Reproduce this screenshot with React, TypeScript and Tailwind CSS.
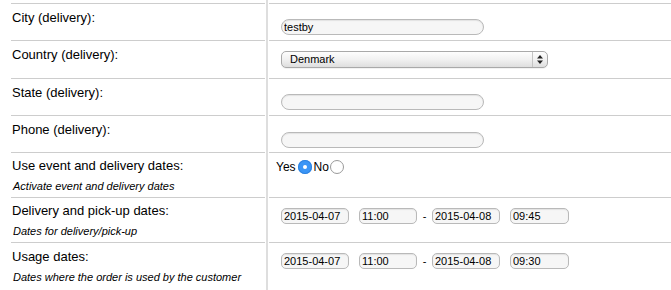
import React from 'react';

const rowLine = 'border-t border-[#cdcdcd]';

function TextBox({ value = '', className = '' }: { value?: string; className?: string }) {
  return (
    <input
      readOnly
      value={value}
      className={`h-[16px] border border-[#b9b9b9] bg-[#f6f6f6] px-[2px] text-[11px] leading-[14px] text-black outline-none shadow-[inset_0_1px_1px_rgba(0,0,0,0.08)] ${className}`}
    />
  );
}

function Select({ value }: { value: string }) {
  return (
    <div className="flex h-[17px] w-[267px] items-stretch rounded-[5px] border border-[#a9a9a9] bg-linear-to-b from-[#fdfdfd] via-[#f1f1f1] to-[#dedede] text-[11px] shadow-[0_1px_0_rgba(0,0,0,0.05)]">
      <div className="flex flex-1 items-center pl-[8px] leading-none">{value}</div>
      <div className="flex w-[15px] items-center justify-center border-l border-[#c4c4c4]">
        <svg width="6" height="9" viewBox="0 0 6 9">
          <path d="M3 0 L6 3.5 L0 3.5 Z" fill="#222" />
          <path d="M3 9 L6 5.5 L0 5.5 Z" fill="#222" />
        </svg>
      </div>
    </div>
  );
}

function Row({
  label,
  hint,
  height,
  labelTop = 'pt-[6px]',
  children,
}: {
  label: string;
  hint?: string;
  height: string;
  labelTop?: string;
  children?: React.ReactNode;
}) {
  return (
    <div className={`flex ${height}`}>
      <div className={`ml-[11px] w-[254px] ${rowLine} ${labelTop}`}>
        <div className="pl-[1px] text-[13px] leading-[15px]">{label}</div>
        {hint && <div className="mt-[7px] pl-[2px] text-[11px] italic leading-[13px]">{hint}</div>}
      </div>
      <div className="mx-[1px] w-[2px] bg-[#dedede]" />
      <div className={`flex-1 ${rowLine} pl-[12px]`}>{children}</div>
    </div>
  );
}

function DateRange({ from, fromTime, to, toTime }: { from: string; fromTime: string; to: string; toTime: string }) {
  return (
    <div className="flex items-center pt-[10px]">
      <TextBox value={from} className="w-[68px] rounded-[5px]" />
      <TextBox value={fromTime} className="ml-[10px] w-[58px] rounded-[5px]" />
      <span className="w-[15px] text-center text-[11px] leading-none">-</span>
      <TextBox value={to} className="w-[68px] rounded-[5px]" />
      <TextBox value={toTime} className="ml-[10px] w-[59px] rounded-[5px]" />
    </div>
  );
}

export default function App() {
  return (
    <div className="h-[290px] w-[671px] overflow-hidden bg-white font-['Liberation_Sans',Arial,sans-serif] text-black">
      <div className="flex h-[3px]">
        <div className="ml-[11px] w-[254px]" />
        <div className="mx-[1px] w-[2px] bg-[#dedede]" />
      </div>

      <Row label="City (delivery):" height="h-[37px]">
        <div className="pt-[10px]">
          <TextBox value="testby" className="w-[203px] rounded-full" />
        </div>
      </Row>

      <Row label="Country (delivery):" height="h-[38px]">
        <div className="pt-[10px]">
          <Select value="Denmark" />
        </div>
      </Row>

      <Row label="State (delivery):" height="h-[37px]">
        <div className="pt-[10px]">
          <TextBox className="w-[203px] rounded-full" />
        </div>
      </Row>

      <Row label="Phone (delivery):" height="h-[37px]">
        <div className="pt-[11px]">
          <TextBox className="w-[203px] rounded-full" />
        </div>
      </Row>

      <Row
        label="Use event and delivery dates:"
        hint="Activate event and delivery dates"
        height="h-[45px]"
        labelTop="pt-[5px]"
      >
        <div className="-ml-[5px] flex items-center pt-[7px] text-[12px] leading-[13px]">
          <span>Yes</span>
          <span className="ml-[2px] flex h-[14px] w-[14px] items-center justify-center rounded-full bg-[#3a95f6] shadow-[inset_0_0_0_1px_#2f83e0]">
            <span className="h-[4px] w-[4px] rounded-full bg-white" />
          </span>
          <span className="ml-[2px]">No</span>
          <span className="ml-[1px] h-[14px] w-[14px] rounded-full border border-[#9a9a9a] bg-white" />
        </div>
      </Row>

      <Row
        label="Delivery and pick-up dates:"
        hint="Dates for delivery/pick-up"
        height="h-[45px]"
        labelTop="pt-[5px]"
      >
        <DateRange from="2015-04-07" fromTime="11:00" to="2015-04-08" toTime="09:45" />
      </Row>

      <Row
        label="Usage dates:"
        hint="Dates where the order is used by the customer"
        height="h-[48px]"
        labelTop="pt-[6px]"
      >
        <DateRange from="2015-04-07" fromTime="11:00" to="2015-04-08" toTime="09:30" />
      </Row>
    </div>
  );
}
